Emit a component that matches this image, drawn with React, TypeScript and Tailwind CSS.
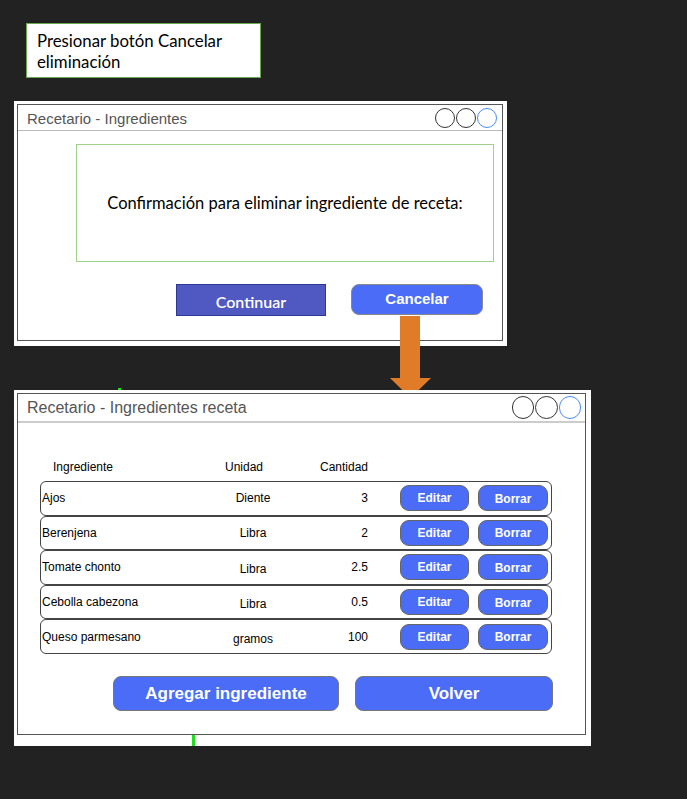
const rows = [
  { name: "Ajos", unit: "Diente", qty: "3", low: false },
  { name: "Berenjena", unit: "Libra", qty: "2", low: false },
  { name: "Tomate chonto", unit: "Libra", qty: "2.5", low: true },
  { name: "Cebolla cabezona", unit: "Libra", qty: "0.5", low: true },
  { name: "Queso parmesano", unit: "gramos", qty: "100", low: true },
];

function Circles({ size }: { size: string }) {
  return (
    <div className="flex gap-px">
      <span className={`${size} rounded-full border border-[#333]`}></span>
      <span className={`${size} rounded-full border border-[#333]`}></span>
      <span className={`${size} rounded-full border border-[#4a8cf7]`}></span>
    </div>
  );
}

export default function App() {
  return (
    <main className="relative w-[687px] h-[799px] bg-[#222222] overflow-hidden font-['Liberation_Sans',Arial,sans-serif]">
      {/* nota del paso */}
      <div className="absolute left-[26px] top-[23px] w-[235px] h-[55px] bg-white border-[1.5px] border-[#6aa84f] pl-[10px] pt-[6px] font-['Lato',sans-serif] text-[16.8px] leading-[21px] text-black">
        Presionar botón Cancelar
        <br />
        eliminación
      </div>

      {/* ventana 1 */}
      <div className="absolute left-[14px] top-[101px] w-[493px] h-[245px] bg-white p-[3px] pr-[4px] pb-[5px]">
        <div className="h-full border border-[#555] flex flex-col">
          <div className="h-[26px] shrink-0 flex items-center justify-between border-b border-[#bbb] pl-[9px] pr-[5px]">
            <span className="text-[15px] text-[#555] pt-[3px]">Recetario - Ingredientes</span>
            <Circles size="w-[20px] h-[20px]" />
          </div>
          <div className="mt-[13px] ml-[58px] mr-[8px] h-[118px] border-[1.5px] border-[#9fd18a] flex items-center justify-center font-['Lato',sans-serif] text-[16.5px] text-black">
            Confirmación para eliminar ingrediente de receta:
          </div>
          <div className="mt-[22px] flex justify-end gap-[25px] pr-[19px]">
            <button className="w-[150px] h-[32px] bg-[#5058c2] border border-[#2e3792] text-white text-[16px] font-semibold font-['Lato',sans-serif] pt-1">
              Continuar
            </button>
            <button className="w-[132px] h-[31px] rounded-[8px] bg-[#4a6cf7] border border-[#8a8a8a] text-white text-[15px] font-bold">
              Cancelar
            </button>
          </div>
        </div>
      </div>

      {/* flecha */}
      <svg className="absolute left-[390px] top-[316px]" width="42" height="83" viewBox="0 0 42 83">
        <rect x="10" y="0" width="20" height="63" fill="#e07b28" />
        <polygon points="0,62 41,62 20.5,82" fill="#e07b28" />
      </svg>

      <div className="absolute left-[118px] top-[388px] w-[3px] h-[5px] bg-[#22dd22]"></div>

      {/* ventana 2 */}
      <div className="absolute left-[14px] top-[390px] w-[577px] h-[356px] bg-white pt-[3px] pl-[3px] pr-[5px] pb-[11px]">
        <div className="h-full border border-[#555] flex flex-col">
          <div className="h-[29px] shrink-0 flex items-center justify-between border-b-2 border-[#ccc] pl-[9px] pr-[4px]">
            <span className="text-[16px] text-[#555]">Recetario - Ingredientes receta</span>
            <Circles size="w-[22.5px] h-[22.5px]" />
          </div>

          <div className="ml-[22px] w-[512px]">
            <div className="mt-[30px] h-[28px] grid grid-cols-[170px_84px_74px] items-center text-[12px] text-black">
              <span className="pl-[13px]">Ingrediente</span>
              <span className="pl-[15px]">Unidad</span>
              <span className="pl-[26px]">Cantidad</span>
            </div>
            {rows.map((r) => (
              <div
                key={r.name}
                className="h-[34.6px] border border-[#444] rounded-[6px] grid grid-cols-[170px_84px_74px_31px_69px_9px_70px] items-center text-[12px] text-black"
              >
                <span className="pl-[1px]">{r.name}</span>
                <span className={`text-center ${r.low ? "mt-1" : ""}`}>{r.unit}</span>
                <span className="text-right pr-[1px]">{r.qty}</span>
                <span></span>
                <button className="h-[26px] rounded-[9px] bg-[#4a6cf7] border border-[#666] text-white text-[12px] font-bold">
                  Editar
                </button>
                <span></span>
                <button className="h-[26px] rounded-[9px] bg-[#4a6cf7] border border-[#666] text-white text-[12px] font-bold pt-px">
                  Borrar
                </button>
              </div>
            ))}
          </div>

          <div className="mt-[22px] ml-[95px] flex gap-[16px]">
            <button className="w-[226px] h-[35px] rounded-[8px] bg-[#4a6cf7] border border-[#777] text-white text-[17px] font-bold">
              Agregar ingrediente
            </button>
            <button className="w-[198px] h-[35px] rounded-[8px] bg-[#4a6cf7] border border-[#777] text-white text-[17px] font-bold">
              Volver
            </button>
          </div>
        </div>
      </div>

      <div className="absolute left-[192px] top-[735px] w-[3px] h-[11px] bg-[#22dd22]"></div>
    </main>
  );
}
